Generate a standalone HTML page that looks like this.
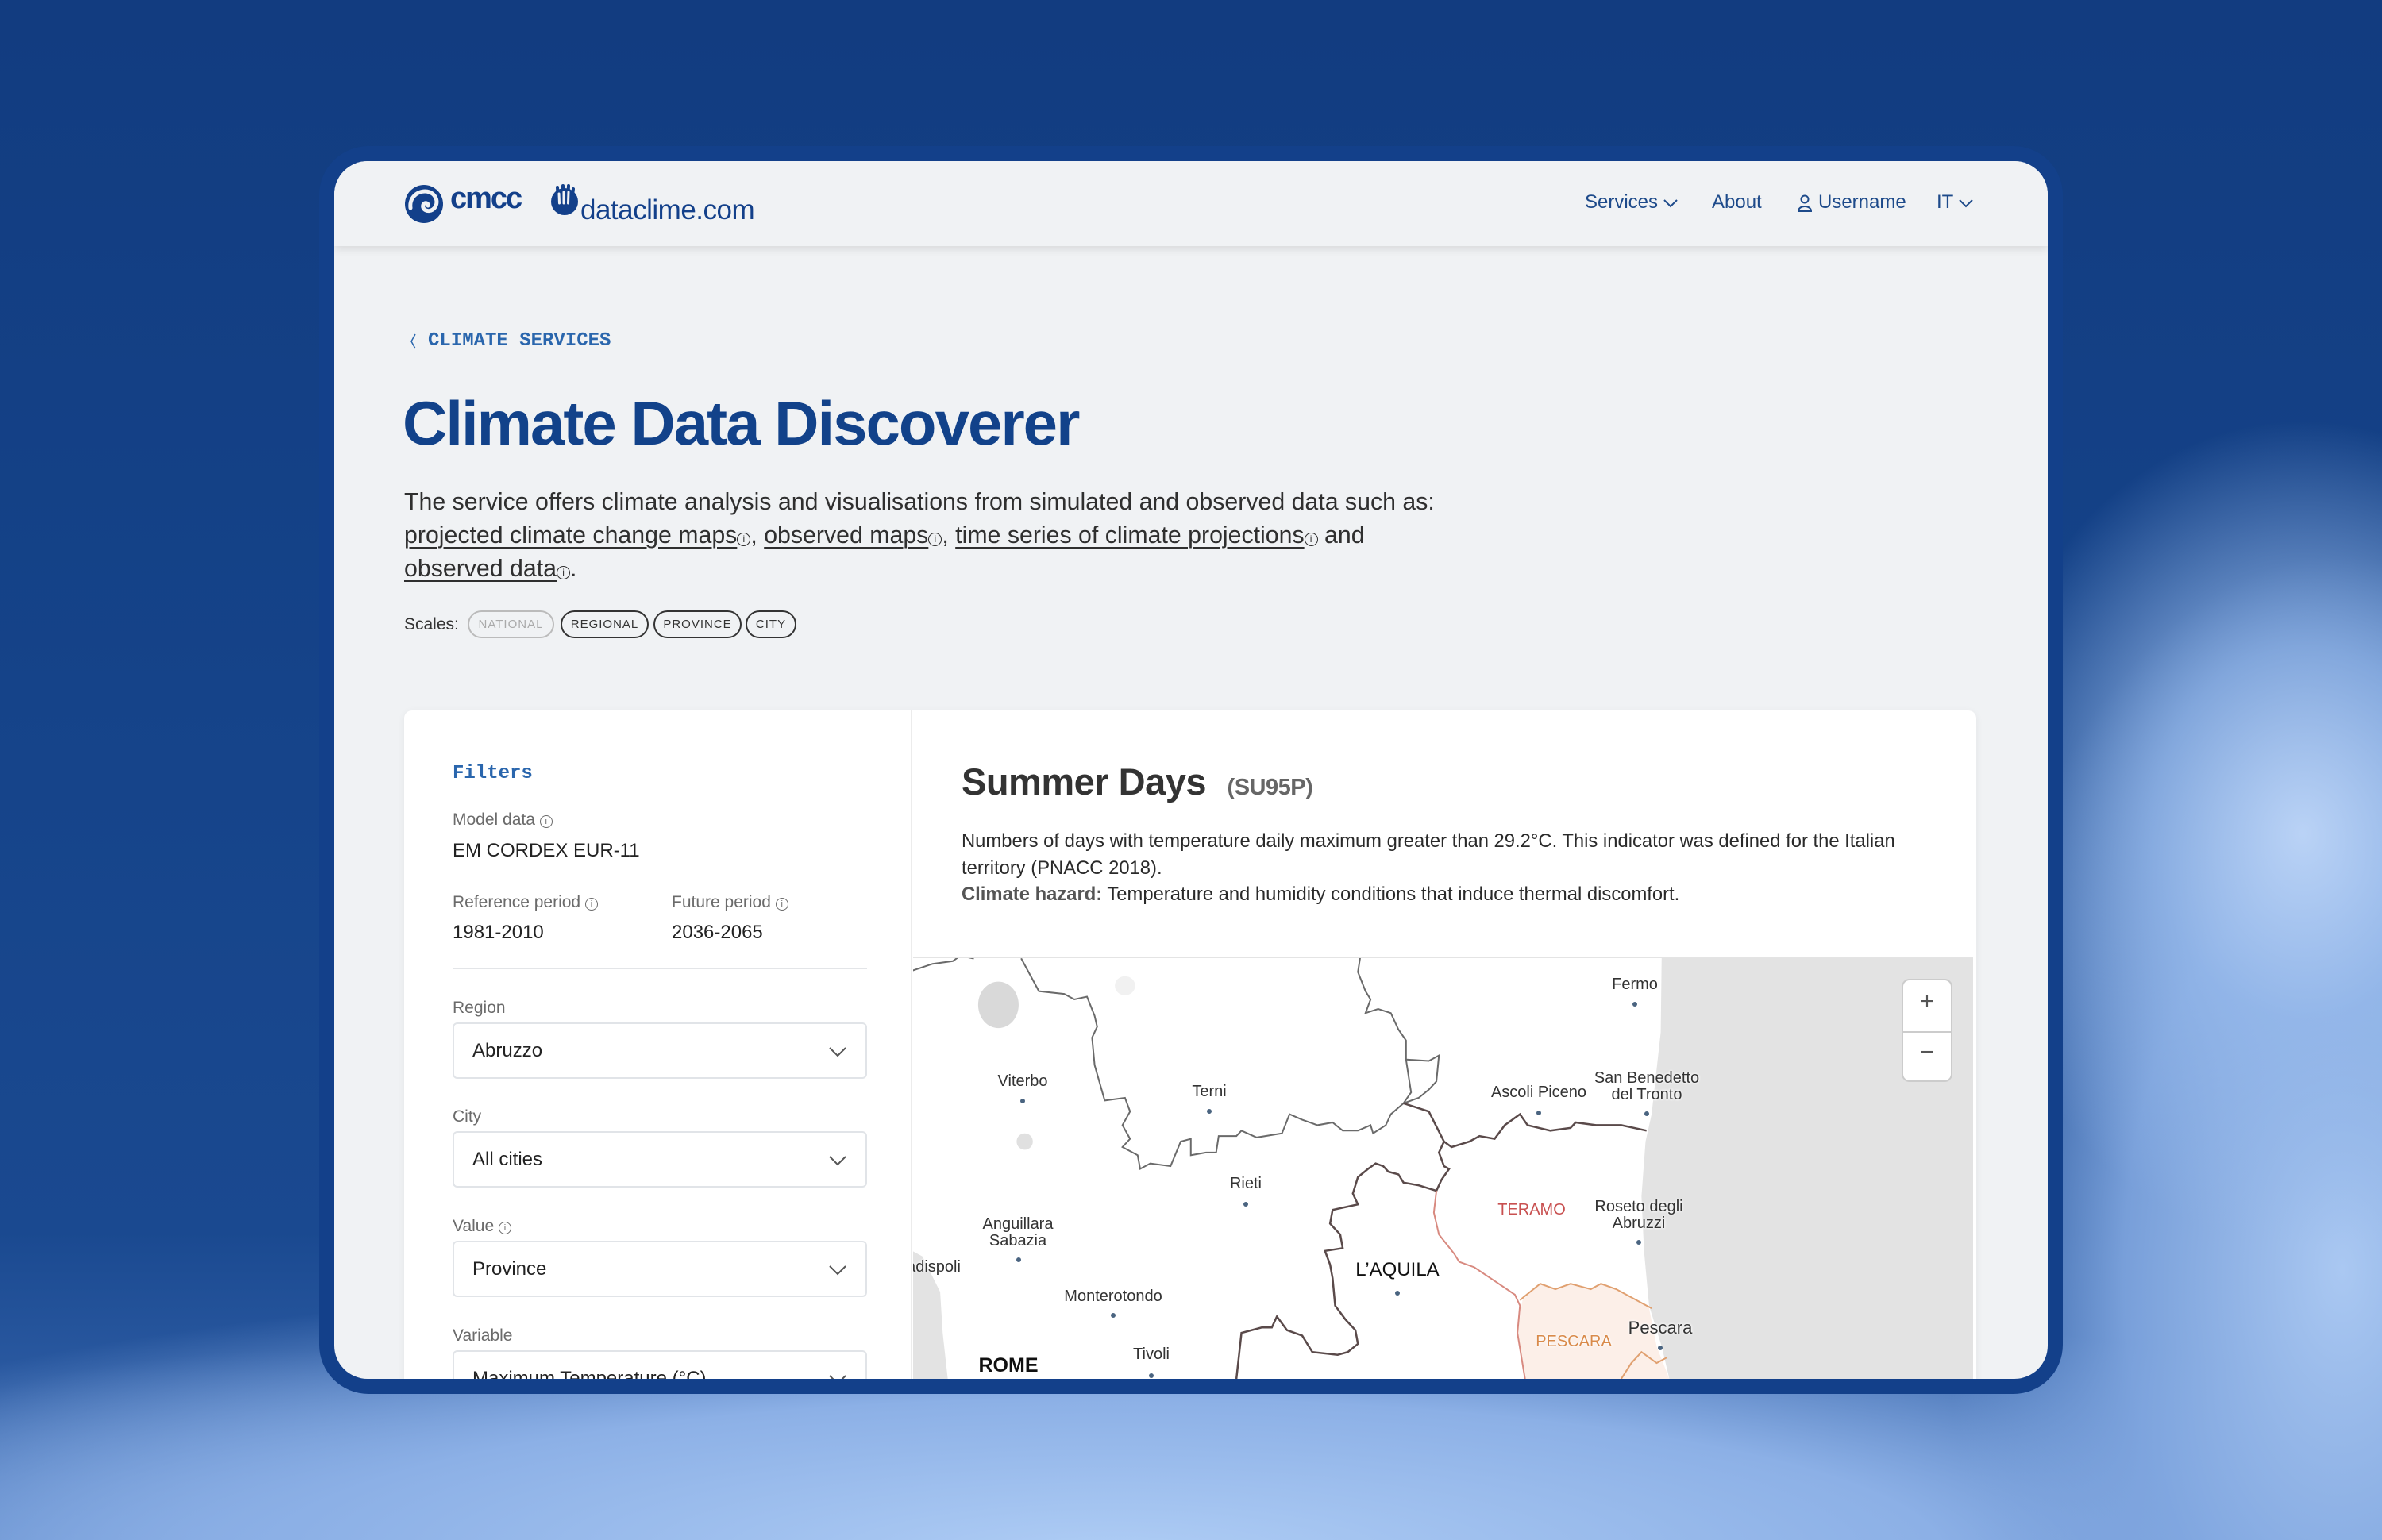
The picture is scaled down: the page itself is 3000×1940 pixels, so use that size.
<!DOCTYPE html>
<html><head><meta charset="utf-8">
<style>
*{margin:0;padding:0;box-sizing:border-box}
html,body{width:3000px;height:1940px;overflow:hidden}
body{position:relative;font-family:"Liberation Sans",sans-serif;
background:
radial-gradient(ellipse 420px 520px at 2900px 1050px,rgba(190,214,248,.95) 0%,rgba(150,185,235,.8) 45%,rgba(120,160,220,0) 100%),
radial-gradient(ellipse 500px 900px at 2950px 1600px,rgba(170,200,242,1) 0%,rgba(130,168,225,.9) 55%,rgba(120,160,220,0) 100%),
radial-gradient(ellipse 1900px 360px at 1400px 1960px,rgba(175,205,245,1) 0%,rgba(140,176,230,1) 55%,rgba(120,160,220,0) 100%),
radial-gradient(ellipse 700px 260px at 400px 1960px,rgba(140,176,230,.9) 0%,rgba(120,160,220,0) 100%),
linear-gradient(180deg,#123c80 0%,#154389 45%,#1a4990 80%,#3c6bb3 100%);}
.abs{position:absolute}
.frame{left:402px;top:184px;width:2196px;height:1572px;background:#13408a;border-radius:62px}
.card{left:421px;top:203px;width:2158px;height:1534px;background:#f0f2f4;border-radius:42px;overflow:hidden}
.header{left:0;top:0;width:2158px;height:107px;background:#f0f2f4;box-shadow:0 4px 10px rgba(0,0,0,.10)}
.nav{color:#1d4a8a;font-size:24px;top:38px}
.blue{color:#12428a}
.para{left:88px;font-size:30.3px;color:#2f2f2f;line-height:42px;white-space:nowrap}
.para u{text-decoration-thickness:2px;text-underline-offset:5px}
.ic{display:inline-block;width:17px;height:17px;border:1.5px solid currentColor;border-radius:50%;font-size:12px;line-height:14px;text-align:center;vertical-align:1px;font-style:normal}
.pill{top:566px;height:35px;border:2px solid #333;border-radius:18px;font-size:15px;letter-spacing:1px;line-height:31px;text-align:center;color:#333}
.panel{left:88px;top:692px;width:1980px;height:900px;background:#fff;border-radius:10px;box-shadow:0 2px 10px rgba(0,0,0,.06)}
.lbl{font-size:21px;color:#6b6b6b}
.val{font-size:24px;color:#222}
.sel{left:61px;width:522px;height:71px;border:2px solid #e1e4e8;border-radius:6px;background:#fff;font-size:24px;color:#222;padding:20px 0 0 23px}
.sel svg{position:absolute;right:24px;top:29px}
.mt{position:absolute;font-size:20px;color:#333;transform:translateX(-50%);text-align:center;line-height:21px;white-space:nowrap;text-shadow:0 0 3px #fff,0 0 3px #fff}
.dot{position:absolute;width:6px;height:6px;border-radius:50%;background:#4a6480}
.lab{position:absolute;left:0;top:15px;width:100%;height:100%}
</style></head><body>
<div class="abs frame"></div>
<div class="abs card">
  <div class="abs header">
    <svg class="abs" style="left:88px;top:29px" width="50" height="50" viewBox="0 0 50 50">
      <circle cx="25" cy="25" r="24" fill="#13408a"/>
      <path d="M8 30 C6 15 20 6 32 10 C42 14 44 26 36 32 C30 36 22 32 24 26 C26 22 31 24 30 27" fill="none" stroke="#f0f2f4" stroke-width="5" stroke-linecap="round"/>
    </svg>
    <div class="abs" style="left:146px;top:26px;font-size:38px;font-weight:bold;color:#13408a;letter-spacing:-2px">cmcc</div>
    <svg class="abs" style="left:272px;top:29px" width="36" height="40" viewBox="0 0 36 40">
      <circle cx="18" cy="22" r="17" fill="#13408a"/>
      <path d="M9 4 L10 22 M16 2 L16 22 M23 2 L22 22 M29 6 L27 22" stroke="#13408a" stroke-width="4" stroke-linecap="round"/>
      <path d="M11 12 L11.5 24 M17 10 L17 24 M23 10 L22.5 24" stroke="#f0f2f4" stroke-width="3" stroke-linecap="round"/>
    </svg>
    <div class="abs" style="left:310px;top:42px;font-size:35px;color:#13408a;letter-spacing:-0.5px">dataclime.com</div>
    <div class="abs nav" style="left:1575px">Services <svg width="18" height="12" viewBox="0 0 18 12"><path d="M1 2 L9 10 L17 2" fill="none" stroke="#1d4a8a" stroke-width="2"/></svg></div>
    <div class="abs nav" style="left:1735px">About</div>
    <svg class="abs" style="left:1842px;top:42px" width="20" height="22" viewBox="0 0 20 22"><circle cx="10" cy="6" r="4.5" fill="none" stroke="#1d4a8a" stroke-width="2"/><path d="M2 21 C2 13 18 13 18 21 Z" fill="none" stroke="#1d4a8a" stroke-width="2"/></svg>
    <div class="abs nav" style="left:1869px">Username</div>
    <div class="abs nav" style="left:2018px">IT <svg width="18" height="12" viewBox="0 0 18 12"><path d="M1 2 L9 10 L17 2" fill="none" stroke="#1d4a8a" stroke-width="2"/></svg></div>
  </div>

  <svg class="abs" style="left:94px;top:216px" width="10" height="22" viewBox="0 0 10 22"><path d="M8 2 L3 11 L8 20" fill="none" stroke="#2a66ad" stroke-width="1.5"/></svg>
  <div class="abs" style="left:118px;top:213px;font-family:'Liberation Mono',monospace;font-size:24px;color:#2a66ad;font-weight:bold">CLIMATE SERVICES</div>
  <div class="abs blue" style="left:86px;top:285px;font-size:78px;font-weight:bold;letter-spacing:-2px">Climate Data Discoverer</div>
  <div class="abs para" style="top:409px">The service offers climate analysis and visualisations from simulated and observed data such as:<br><u>projected climate change maps</u><i class="ic">i</i>, <u>observed maps</u><i class="ic">i</i>, <u>time series of climate projections</u><i class="ic">i</i> and<br><u>observed data</u><i class="ic">i</i>.</div>
  <div class="abs" style="left:88px;top:572px;font-size:21px;color:#333">Scales:</div>
  <div class="abs pill" style="left:168px;width:109px;border-color:#bbb;color:#aaa">NATIONAL</div>
  <div class="abs pill" style="left:285px;width:111px">REGIONAL</div>
  <div class="abs pill" style="left:402px;width:111px">PROVINCE</div>
  <div class="abs pill" style="left:518px;width:64px">CITY</div>

  <div class="abs panel">
    <div class="abs" style="left:638px;top:0;width:2px;height:900px;background:#ececec"></div>
    <div class="abs" style="left:61px;top:66px;font-family:'Liberation Mono',monospace;font-size:24px;font-weight:bold;color:#2a66ad">Filters</div>
    <div class="abs lbl" style="left:61px;top:126px">Model data <i class="ic" style="width:16px;height:16px;font-size:11px">i</i></div>
    <div class="abs val" style="left:61px;top:163px">EM CORDEX EUR-11</div>
    <div class="abs lbl" style="left:61px;top:230px">Reference period <i class="ic" style="width:16px;height:16px;font-size:11px">i</i></div>
    <div class="abs val" style="left:61px;top:266px">1981-2010</div>
    <div class="abs lbl" style="left:337px;top:230px">Future period <i class="ic" style="width:16px;height:16px;font-size:11px">i</i></div>
    <div class="abs val" style="left:337px;top:266px">2036-2065</div>
    <div class="abs" style="left:61px;top:324px;width:522px;height:2px;background:#e3e5e8"></div>
    <div class="abs lbl" style="left:61px;top:363px">Region</div>
    <div class="abs sel" style="top:393px">Abruzzo<svg width="22" height="13" viewBox="0 0 22 13"><path d="M1 1 L11 11 L21 1" fill="none" stroke="#555" stroke-width="2"/></svg></div>
    <div class="abs lbl" style="left:61px;top:500px">City</div>
    <div class="abs sel" style="top:530px">All cities<svg width="22" height="13" viewBox="0 0 22 13"><path d="M1 1 L11 11 L21 1" fill="none" stroke="#555" stroke-width="2"/></svg></div>
    <div class="abs lbl" style="left:61px;top:638px">Value <i class="ic" style="width:16px;height:16px;font-size:11px">i</i></div>
    <div class="abs sel" style="top:668px">Province<svg width="22" height="13" viewBox="0 0 22 13"><path d="M1 1 L11 11 L21 1" fill="none" stroke="#555" stroke-width="2"/></svg></div>
    <div class="abs lbl" style="left:61px;top:776px">Variable</div>
    <div class="abs sel" style="top:806px">Maximum Temperature (°C)<svg width="22" height="13" viewBox="0 0 22 13"><path d="M1 1 L11 11 L21 1" fill="none" stroke="#555" stroke-width="2"/></svg></div>

    <div class="abs" style="left:702px;top:62px;font-size:47px;font-weight:bold;color:#333;letter-spacing:-0.5px">Summer Days <span style="font-size:29px;color:#666;margin-left:14px;font-weight:bold">(SU95P)</span></div>
    <div class="abs" style="left:702px;top:148px;font-size:23.8px;color:#2a2a2a;line-height:33.5px;white-space:nowrap">Numbers of days with temperature daily maximum greater than 29.2°C. This indicator was defined for the Italian<br>territory (PNACC 2018).<br><b style="color:#555">Climate hazard:</b> Temperature and humidity conditions that induce thermal discomfort.</div>

    <div class="abs" style="left:641px;top:310px;width:1335px;height:600px;background:#e3e3e3;border-top:2px solid #e4e4e4;overflow:hidden">
      <svg class="abs" style="left:-1px;top:-10px" width="1000" height="540" viewBox="0 0 1568 1568" preserveAspectRatio="none">
        <path d="M0 0 L1480 0 L1478 300 L1460 600 L1448 700 L1440 900 L1445 1100 L1455 1300 L1480 1450 L1495 1568 L70 1568 L60 1400 L55 1250 L20 1120 L0 1100 Z" fill="#fff"/>
        <path d="M1205 1280 L1240 1220 L1270 1240 L1300 1220 L1340 1240 L1360 1220 L1390 1240 L1420 1270 L1455 1310 L1470 1450 L1495 1568 L1210 1568 L1195 1400 Z" fill="#fcefe8"/>
        <ellipse cx="170" cy="200" rx="40" ry="85" fill="#d9d9d9"/>
        <ellipse cx="222" cy="700" rx="16" ry="30" fill="#e0e0e0"/>
        <ellipse cx="420" cy="130" rx="20" ry="35" fill="#f1f1f1"/>
        <g fill="none" stroke="#6a6a6a" stroke-width="2">
          <path vector-effect="non-scaling-stroke" d="M0 75 L40 50 L80 40 L95 20 L120 30 L125 0"/>
          <path vector-effect="non-scaling-stroke" d="M215 30 L250 150 L300 160 L320 180 L345 170 L360 240 L365 280 L355 320 L360 420 L380 550 L420 540 L430 590 L415 640 L430 690 L415 720 L445 750 L450 800 L470 780 L510 790 L530 700 L550 690 L550 750 L580 740 L600 740 L605 680 L640 680 L650 660 L680 685 L730 670 L745 600 L770 620 L800 640 L830 630 L850 660 L880 660 L905 640 L910 670 L935 640 L945 600 L970 560 L985 520 L975 400 L1020 405 L1040 385 L1035 480 L1020 510 L1000 540 L970 560"/>
          <path vector-effect="non-scaling-stroke" d="M885 20 L880 80 L895 150 L905 180 L895 230 L920 215 L945 230 L960 290 L975 330 L975 400"/>
        </g>
        <g fill="none" stroke="#5a4a4a" stroke-width="2.5">
          <path vector-effect="non-scaling-stroke" d="M970 560 L1020 590 L1050 700 L1065 720 L1100 700 L1120 680 L1150 690 L1170 640 L1200 600 L1215 640 L1260 660 L1300 650 L1310 630 L1350 640 L1400 640 L1450 660"/>
          <path vector-effect="non-scaling-stroke" d="M1050 700 L1040 740 L1050 790 L1060 800 L1045 840 L1035 880 L1000 860 L970 850 L960 820 L940 810 L930 790 L915 780 L900 800 L880 830 L870 890 L880 930 L830 950 L825 1000 L845 1040 L850 1090 L815 1100 L825 1150 L830 1200 L835 1300 L855 1350 L875 1390 L880 1440 L860 1470 L840 1480 L790 1470 L770 1410 L740 1390 L720 1340 L710 1380 L690 1380 L650 1400 L640 1568"/>
        </g>
        <path vector-effect="non-scaling-stroke" d="M1035 880 L1030 960 L1040 1040 L1070 1110 L1080 1140 L1110 1160 L1150 1210 L1190 1260 L1200 1300 L1195 1400 L1210 1568" fill="none" stroke="#d88a80" stroke-width="2"/>
        <path vector-effect="non-scaling-stroke" d="M1200 1280 L1240 1220 L1270 1240 L1300 1220 L1340 1240 L1360 1220 L1390 1240 L1420 1270 L1450 1300 L1460 1310 M1400 1568 L1420 1510 L1440 1470 L1470 1510 L1490 1490" fill="none" stroke="#e0a070" stroke-width="2"/>
      </svg>
      <div class="lab">
      <div class="mt" style="left:909px;top:8px">Fermo</div><div class="dot" style="left:906px;top:40px"></div>
      <div class="mt" style="left:138px;top:130px">Viterbo</div><div class="dot" style="left:135px;top:162px"></div>
      <div class="mt" style="left:373px;top:143px">Terni</div><div class="dot" style="left:370px;top:175px"></div>
      <div class="mt" style="left:788px;top:144px">Ascoli Piceno</div><div class="dot" style="left:785px;top:177px"></div>
      <div class="mt" style="left:924px;top:126px">San Benedetto<br>del Tronto</div><div class="dot" style="left:921px;top:178px"></div>
      <div class="mt" style="left:419px;top:259px">Rieti</div><div class="dot" style="left:416px;top:292px"></div>
      <div class="mt" style="left:779px;top:292px;color:#c85050">TERAMO</div>
      <div class="mt" style="left:914px;top:288px">Roseto degli<br>Abruzzi</div><div class="dot" style="left:911px;top:340px"></div>
      <div class="mt" style="left:132px;top:310px">Anguillara<br>Sabazia</div><div class="dot" style="left:130px;top:362px"></div>
      <div class="mt" style="left:26px;top:364px">adispoli</div>
      <div class="mt" style="left:610px;top:367px;font-size:24px;color:#111">L’AQUILA</div><div class="dot" style="left:607px;top:404px"></div>
      <div class="mt" style="left:252px;top:401px">Monterotondo</div><div class="dot" style="left:249px;top:432px"></div>
      <div class="mt" style="left:941px;top:440px;font-size:22px">Pescara</div><div class="dot" style="left:938px;top:473px"></div>
      <div class="mt" style="left:832px;top:458px;color:#d98a4a">PESCARA</div>
      <div class="mt" style="left:300px;top:474px">Tivoli</div><div class="dot" style="left:297px;top:508px"></div>
      <div class="mt" style="left:120px;top:488px;font-size:25px;font-weight:bold;color:#111">ROME</div>
      </div>
      <div class="abs" style="left:1245px;top:26px;width:64px;height:130px;background:#fff;border:2px solid #ccc;border-radius:10px">
        <div class="abs" style="left:0;top:64px;width:60px;height:2px;background:#ccc"></div>
        <div class="abs" style="left:0;top:10px;width:60px;text-align:center;font-size:30px;color:#555">+</div>
        <div class="abs" style="left:0;top:74px;width:60px;text-align:center;font-size:30px;color:#555">−</div>
      </div>
    </div>
  </div>
</div>
</body></html>
